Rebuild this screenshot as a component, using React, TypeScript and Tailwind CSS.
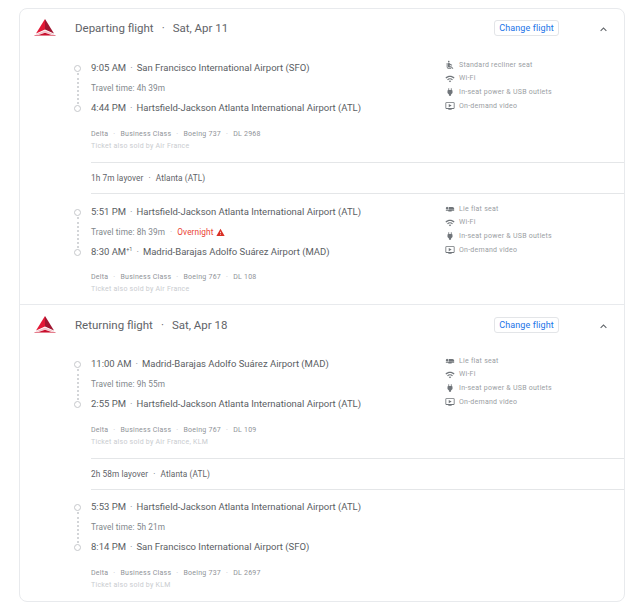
import {
  MdAirlineSeatFlat,
  MdAirlineSeatReclineNormal,
  MdKeyboardArrowUp,
  MdOndemandVideo,
  MdPower,
  MdWarning,
  MdWifi,
} from 'react-icons/md'

function DeltaLogo() {
  return (
    <svg width="22" height="18" viewBox="0 0 22 18" className="shrink-0">
      <polygon points="11,0 11,10.5 2,14.6" fill="#e21836" />
      <polygon points="11,0 20,14.6 11,10.5" fill="#a01530" />
      <polygon points="11,11.5 1.4,15.6 4,15.8 11,13.4 18,15.8 20.6,15.6" fill="#f3c3ca" />
      <polygon points="11,13.8 4.6,16 17.4,16" fill="#c8102e" />
      <rect x="0.5" y="16.3" width="21" height="0.7" fill="#d8475c" />
    </svg>
  )
}

function Sep() {
  return <span className="mx-[4px] text-[#80868b]">·</span>
}

function SmallSep() {
  return <span className="mx-[5px] text-[#bdc1c6]">·</span>
}

function Header({ title, date, top }: { title: string; date: string; top: string }) {
  return (
    <div className={`flex h-[38px] items-center ${top}`}>
      <div className="w-[55px] pl-[14px]">
        <DeltaLogo />
      </div>
      <div className="mt-[2px] text-[11.5px] text-[#5f6368]">
        {title}
        <span className="mx-[8px]">·</span>
        {date}
      </div>
      <div className="ml-auto mr-[38px] flex h-[16px] w-[65px] items-center justify-center rounded-[3px] border border-[#e3e5e8] pt-[1px] text-[9px] tracking-[0.1px] text-[#1a73e8]">
        Change flight
      </div>
      <MdKeyboardArrowUp className="mr-[14px] mt-[2px] text-[13px] text-[#5f6368]" />
    </div>
  )
}

type Amenity = { icon: typeof MdWifi; label: string }

const wifi: Amenity = { icon: MdWifi, label: 'Wi-Fi' }
const power: Amenity = { icon: MdPower, label: 'In-seat power & USB outlets' }
const video: Amenity = { icon: MdOndemandVideo, label: 'On-demand video' }
const recliner: Amenity[] = [
  { icon: MdAirlineSeatReclineNormal, label: 'Standard recliner seat' },
  wifi,
  power,
  video,
]
const flat: Amenity[] = [{ icon: MdAirlineSeatFlat, label: 'Lie flat seat' }, wifi, power, video]

type LegProps = {
  depart: string
  from: string
  travel: string
  overnight?: boolean
  arrive: string
  plusOne?: boolean
  to: string
  plane: string
  flightNo: string
  sold: string
  amenities?: Amenity[]
  className: string
  detailGap?: string
}

function Leg(props: LegProps) {
  return (
    <div className={`flex ${props.className}`}>
      <div className="ml-[54px] flex h-[60px] w-[17px] flex-col items-start py-[6.5px]">
        <div className="size-[7px] rounded-full border border-[#c6c8cb]" />
        <div className="my-[1px] ml-[2.5px] flex-1 border-l-2 border-dotted border-[#d3d5d8]" />
        <div className="size-[7px] rounded-full border border-[#c6c8cb]" />
      </div>
      <div className="w-[354px]">
        <div className="flex h-[20px] items-center text-[9.5px] text-[#5a5e63]">
          {props.depart}
          <Sep />
          {props.from}
        </div>
        <div className="flex h-[20px] items-center text-[8.25px] tracking-[0.1px] text-[#80868b]">
          {props.travel}
          {props.overnight && (
            <>
              <span className="mx-[5px] text-[#bdc1c6]">·</span>
              <span className="text-[#ea4335]">Overnight</span>
              <MdWarning className="ml-[3px] text-[9px] text-[#d93025]" />
            </>
          )}
        </div>
        <div className="flex h-[20px] items-center text-[9.5px] text-[#5a5e63]">
          {props.arrive}
          {props.plusOne && <sup className="text-[5.5px]">+1</sup>}
          <Sep />
          {props.to}
        </div>
        <div className={`${props.detailGap ?? 'mt-[10px]'} text-[7px] leading-[12px] tracking-[0.25px] text-[#8f9398]`}>
          Delta
          <SmallSep />
          Business Class
          <SmallSep />
          {props.plane}
          <SmallSep />
          {props.flightNo}
        </div>
        <div className="text-[7px] leading-[12px] tracking-[0.25px] text-[#c9cccf]">
          Ticket also sold by {props.sold}
        </div>
      </div>
      {props.amenities && (
        <div>
          {props.amenities.map((a) => (
            <div key={a.label} className="flex h-[13.8px] items-center text-[7px] tracking-[0.25px] text-[#9a9ea3]">
              <a.icon className="mr-[4px] w-[10px] text-[10px] text-[#70757a]" />
              {a.label}
            </div>
          ))}
        </div>
      )}
    </div>
  )
}

function Layover({ text, city }: { text: string; city: string }) {
  return (
    <div className="ml-[71px] flex h-[32px] items-center border-y border-[#e4e6e8] text-[8.25px] tracking-[0.1px] text-[#5f6368]">
      {text}
      <span className="mx-[5px]">·</span>
      {city}
    </div>
  )
}

export default function App() {
  return (
    <div className="h-[610px] bg-white pl-[19px] pt-[8px] font-['Roboto',sans-serif]">
      <div className="h-[594px] w-[606px] rounded-lg border border-[#e8eaed]">
        <Header title="Departing flight" date="Sat, Apr 11" top="" />
        <Leg
          className="pt-[11px] pb-[10px]"
          depart="9:05 AM"
          from="San Francisco International Airport (SFO)"
          travel="Travel time: 4h 39m"
          arrive="4:44 PM"
          to="Hartsfield-Jackson Atlanta International Airport (ATL)"
          plane="Boeing 737"
          flightNo="DL 2968"
          sold="Air France"
          amenities={recliner}
        />
        <Layover text="1h 7m layover" city="Atlanta (ATL)" />
        <Leg
          className="pt-[8px] pb-[9px]"
          detailGap="mt-[9px]"
          depart="5:51 PM"
          from="Hartsfield-Jackson Atlanta International Airport (ATL)"
          travel="Travel time: 8h 39m"
          overnight
          arrive="8:30 AM"
          plusOne
          to="Madrid-Barajas Adolfo Suárez Airport (MAD)"
          plane="Boeing 767"
          flightNo="DL 108"
          sold="Air France"
          amenities={flat}
        />
        <div className="border-t border-[#e8eaed]">
          <Header title="Returning flight" date="Sat, Apr 18" top="mt-[1px]" />
        </div>
        <Leg
          className="pt-[10px] pb-[10px]"
          depart="11:00 AM"
          from="Madrid-Barajas Adolfo Suárez Airport (MAD)"
          travel="Travel time: 9h 55m"
          arrive="2:55 PM"
          to="Hartsfield-Jackson Atlanta International Airport (ATL)"
          plane="Boeing 767"
          flightNo="DL 109"
          sold="Air France, KLM"
          amenities={flat}
        />
        <Layover text="2h 58m layover" city="Atlanta (ATL)" />
        <Leg
          className="pt-[7px]"
          depart="5:53 PM"
          from="Hartsfield-Jackson Atlanta International Airport (ATL)"
          travel="Travel time: 5h 21m"
          arrive="8:14 PM"
          to="San Francisco International Airport (SFO)"
          plane="Boeing 737"
          flightNo="DL 2697"
          sold="KLM"
        />
      </div>
    </div>
  )
}
